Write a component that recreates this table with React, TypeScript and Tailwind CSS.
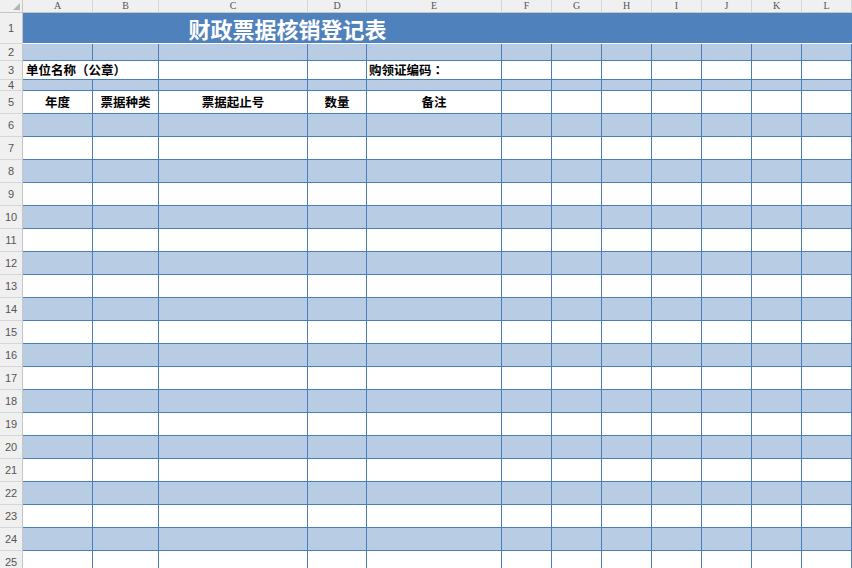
import React from "react";

const letters = ["A", "B", "C", "D", "E", "F", "G", "H", "I", "J", "K", "L"];
const line = "border-r border-b border-[#4a7ebb]";
const cjk = "font-['Microsoft_YaHei','Noto_Sans_CJK_SC',sans-serif]";

function RowHead({ n }: { n: number }) {
  return (
    <div className="flex items-center justify-center border-r border-b border-r-[#c6c6c6] border-b-[#d6d6d6] bg-[#f0f0f0] font-['Liberation_Sans',sans-serif] text-[11px] text-[#555]">
      {n}
    </div>
  );
}

function Cells({ bg, from = 0 }: { bg: string; from?: number }) {
  return (
    <>
      {letters.slice(from).map((l) => (
        <div key={l} className={`${line} ${bg}`} />
      ))}
    </>
  );
}

export default function App() {
  const body = Array.from({ length: 20 }, (_, i) => i + 6);

  return (
    <div className="h-[568px] w-[852px] overflow-hidden bg-white">
      <div className="grid grid-cols-[23px_70px_66px_149px_59px_135px_repeat(7,50px)] grid-rows-[13px_31px_17px_19px_11px_repeat(21,23px)]">
        {/* column header */}
        <div className="relative border-r border-b border-[#c6c6c6] bg-[#f0f0f0]">
          <div className="absolute right-[2px] bottom-[2px] h-0 w-0 border-l-[7px] border-t-[7px] border-l-transparent border-t-transparent border-r-0 border-b-[7px] border-b-[#b4b4b4] border-r-[#b4b4b4]" />
        </div>
        {letters.map((l) => (
          <div
            key={l}
            className="flex items-center justify-center border-r border-b border-r-[#d6d6d6] border-b-[#c6c6c6] bg-[#f0f0f0] font-['Liberation_Serif',serif] text-[10px] leading-none text-[#555]"
          >
            {l}
          </div>
        ))}

        {/* row 1: title */}
        <RowHead n={1} />
        <div className="col-span-12 flex border-b border-white bg-[#4f81bd]">
          <div className={`flex w-[529px] items-center justify-center text-[22px] font-bold text-white ${cjk}`}>
            财政票据核销登记表
          </div>
        </div>

        {/* row 2 */}
        <RowHead n={2} />
        <Cells bg="bg-[#b8cce4]" />

        {/* row 3 */}
        <RowHead n={3} />
        <div className={`col-span-2 flex items-center pl-[3px] text-[12.5px] font-bold text-black ${line} ${cjk}`}>
          单位名称（公章）
        </div>
        <div className={line} />
        <div className={line} />
        <div className={`flex items-center pl-[2px] text-[12.5px] font-bold text-black ${line} ${cjk}`}>
          购领证编码<span className="font-['Noto_Sans_CJK_TC',sans-serif]">：</span>
        </div>
        <Cells bg="bg-white" from={5} />

        {/* row 4 */}
        <RowHead n={4} />
        <Cells bg="bg-[#b8cce4]" />

        {/* row 5 */}
        <RowHead n={5} />
        {["年度", "票据种类", "票据起止号", "数量", "备注"].map((t) => (
          <div
            key={t}
            className={`flex items-center justify-center text-[12.5px] font-bold text-black ${line} ${cjk}`}
          >
            {t}
          </div>
        ))}
        <Cells bg="bg-white" from={5} />

        {body.map((n) => (
          <React.Fragment key={n}>
            <RowHead n={n} />
            <Cells bg={n % 2 === 0 ? "bg-[#b8cce4]" : "bg-white"} />
          </React.Fragment>
        ))}
      </div>
    </div>
  );
}
